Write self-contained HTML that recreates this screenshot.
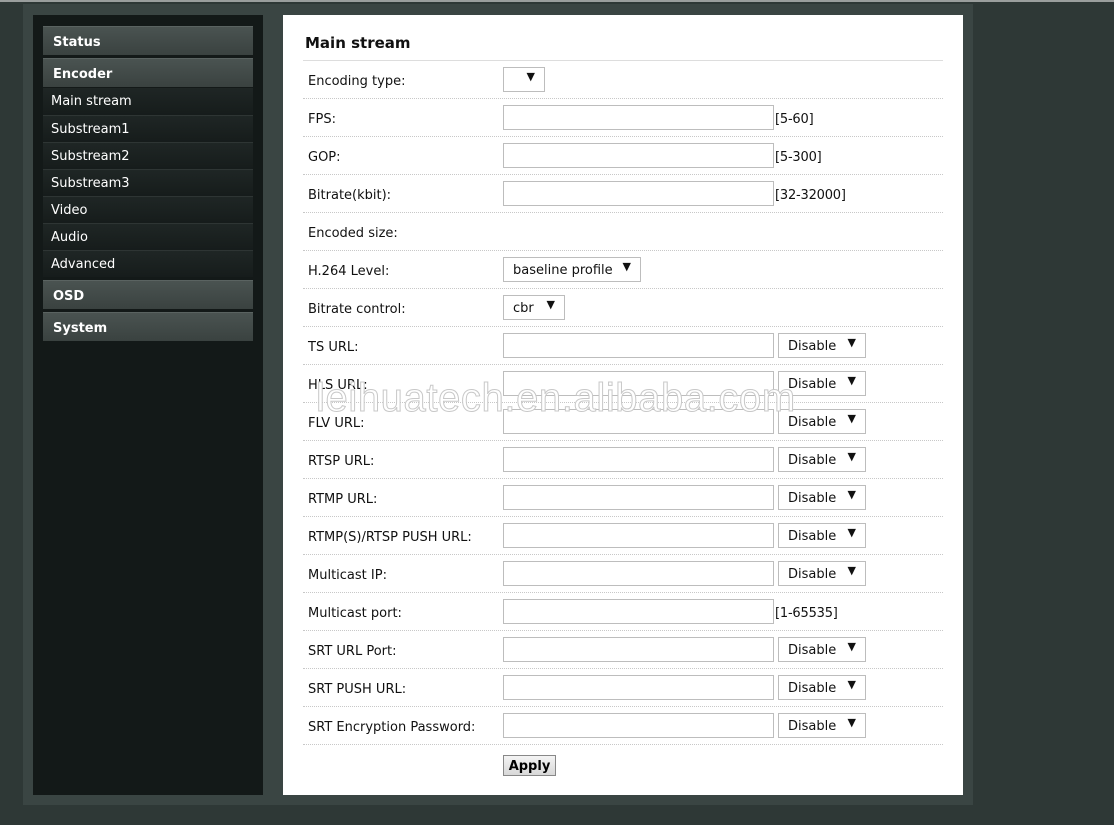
<!DOCTYPE html>
<html><head><style>
*{margin:0;padding:0;box-sizing:border-box}
body{width:1114px;height:825px;background:#2e3836;position:relative;overflow:hidden;font-family:"DejaVu Sans","Liberation Sans",sans-serif;font-size:13px}
.top{position:absolute;left:0;top:0;width:1114px;height:2px;background:#9a9e9d}
.panel{position:absolute;left:23px;top:4px;width:950px;height:801px;background:#3a4543}
.side{position:absolute;left:33px;top:15px;width:230px;height:780px;background:#131918}
.hd{position:absolute;left:43px;width:210px;height:29px;background:linear-gradient(#4a5351,#3a4240);border-top:1px solid #5a6361;color:#fff;font-weight:bold;font-size:13px;padding:8px 0 0 10px}
.it{position:absolute;left:43px;width:210px;height:27px;background:linear-gradient(#1f2625,#161c1b);border-top:1px solid #2e3534;color:#fff;font-size:13px;padding:6px 0 0 8px}
.main{position:absolute;left:283px;top:15px;width:680px;height:780px;background:#fff}
h2{position:absolute;left:305px;top:34px;font-size:15px;font-weight:bold;color:#111}
.line{position:absolute;left:303px;width:640px;border-top:1px dotted #c8c8c8}
.lbl{position:absolute;left:308px;color:#111;font-size:13px;margin-top:2px}
.in{position:absolute;left:503px;width:271px;height:25px;border:1px solid #bdbdbd}
.sel{position:absolute;height:25px;border:1px solid #bdbdbd;font-size:13px;color:#111;padding:5px 0 0 9px}
.sel b{position:absolute;right:9px;top:2px;font-size:11px}
.rng{position:absolute;left:775px;font-size:13px;color:#111;margin-top:2px;letter-spacing:-0.2px}
.btn{position:absolute;left:503px;top:755px;width:53px;height:21px;border:1px solid #888;background:linear-gradient(#f4f4f4,#d8d8d8);font-weight:bold;font-size:13px;text-align:center;padding-top:3px}
.wm{position:absolute;left:316px;top:376px;font-family:"Liberation Sans",sans-serif;font-size:40px;color:#fff;-webkit-text-stroke:1px #c8c8c8;letter-spacing:0.6px}
</style></head><body>
<div class="top"></div>
<div class="panel"></div>
<div class="side"></div>
<div class="hd" style="top:26px">Status</div>
<div class="hd" style="top:58px">Encoder</div>
<div class="it" style="top:88px;border-top:none">Main stream</div>
<div class="it" style="top:115px">Substream1</div>
<div class="it" style="top:142px">Substream2</div>
<div class="it" style="top:169px">Substream3</div>
<div class="it" style="top:196px">Video</div>
<div class="it" style="top:223px">Audio</div>
<div class="it" style="top:250px">Advanced</div>
<div class="hd" style="top:280px">OSD</div>
<div class="hd" style="top:312px">System</div>
<div class="main"></div>
<h2>Main stream</h2>
<div class="line" style="top:60px;border-top:1px solid #ddd"></div>
<div class="line" style="top:98px"></div><div class="line" style="top:136px"></div><div class="line" style="top:174px"></div><div class="line" style="top:212px"></div><div class="line" style="top:250px"></div><div class="line" style="top:288px"></div><div class="line" style="top:326px"></div><div class="line" style="top:364px"></div><div class="line" style="top:402px"></div><div class="line" style="top:440px"></div><div class="line" style="top:478px"></div><div class="line" style="top:516px"></div><div class="line" style="top:554px"></div><div class="line" style="top:592px"></div><div class="line" style="top:630px"></div><div class="line" style="top:668px"></div><div class="line" style="top:706px"></div><div class="line" style="top:744px"></div>

<div class="lbl" style="top:72px">Encoding type:</div>
<div class="sel" style="left:503px;top:67px;width:42px"><b>▼</b></div>
<div class="lbl" style="top:110px">FPS:</div><div class="in" style="top:105px"></div><div class="rng" style="top:110px">[5-60]</div>
<div class="lbl" style="top:148px">GOP:</div><div class="in" style="top:143px"></div><div class="rng" style="top:148px">[5-300]</div>
<div class="lbl" style="top:186px">Bitrate(kbit):</div><div class="in" style="top:181px"></div><div class="rng" style="top:186px">[32-32000]</div>
<div class="lbl" style="top:224px">Encoded size:</div>
<div class="lbl" style="top:262px">H.264 Level:</div>
<div class="sel" style="left:503px;top:257px;width:138px">baseline profile<b>▼</b></div>
<div class="lbl" style="top:300px">Bitrate control:</div>
<div class="sel" style="left:503px;top:295px;width:62px">cbr<b>▼</b></div>

<div class="lbl" style="top:338px">TS URL:</div><div class="in" style="top:333px"></div><div class="sel" style="left:778px;top:333px;width:88px">Disable<b>▼</b></div>
<div class="lbl" style="top:376px">HLS URL:</div><div class="in" style="top:371px"></div><div class="sel" style="left:778px;top:371px;width:88px">Disable<b>▼</b></div>
<div class="lbl" style="top:414px">FLV URL:</div><div class="in" style="top:409px"></div><div class="sel" style="left:778px;top:409px;width:88px">Disable<b>▼</b></div>
<div class="lbl" style="top:452px">RTSP URL:</div><div class="in" style="top:447px"></div><div class="sel" style="left:778px;top:447px;width:88px">Disable<b>▼</b></div>
<div class="lbl" style="top:490px">RTMP URL:</div><div class="in" style="top:485px"></div><div class="sel" style="left:778px;top:485px;width:88px">Disable<b>▼</b></div>
<div class="lbl" style="top:528px">RTMP(S)/RTSP PUSH URL:</div><div class="in" style="top:523px"></div><div class="sel" style="left:778px;top:523px;width:88px">Disable<b>▼</b></div>
<div class="lbl" style="top:566px">Multicast IP:</div><div class="in" style="top:561px"></div><div class="sel" style="left:778px;top:561px;width:88px">Disable<b>▼</b></div>
<div class="lbl" style="top:604px">Multicast port:</div><div class="in" style="top:599px"></div><div class="rng" style="top:604px">[1-65535]</div>
<div class="lbl" style="top:642px">SRT URL Port:</div><div class="in" style="top:637px"></div><div class="sel" style="left:778px;top:637px;width:88px">Disable<b>▼</b></div>
<div class="lbl" style="top:680px">SRT PUSH URL:</div><div class="in" style="top:675px"></div><div class="sel" style="left:778px;top:675px;width:88px">Disable<b>▼</b></div>
<div class="lbl" style="top:718px">SRT Encryption Password:</div><div class="in" style="top:713px"></div><div class="sel" style="left:778px;top:713px;width:88px">Disable<b>▼</b></div>
<div class="btn">Apply</div>
<div class="wm">leihuatech.en.alibaba.com</div>
</body></html>
